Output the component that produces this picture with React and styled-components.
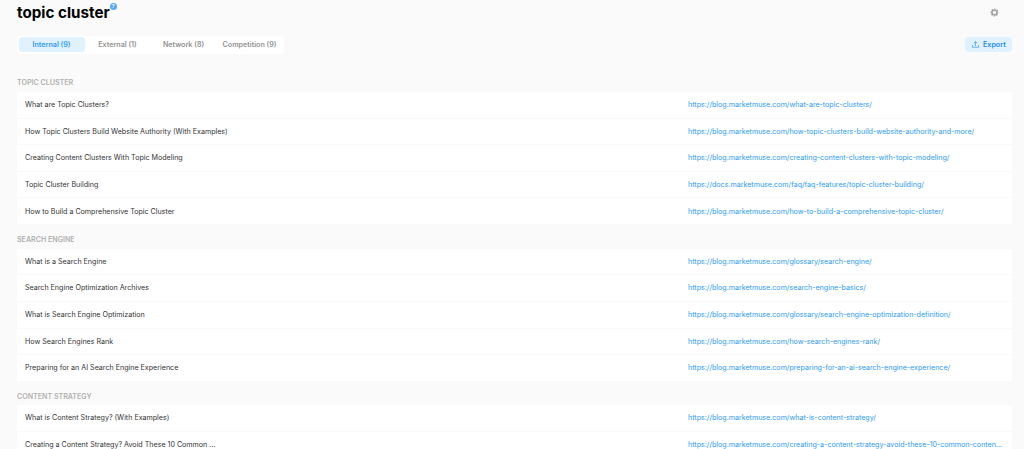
import styled, { createGlobalStyle } from "styled-components"
import { useState } from "react"


const GlobalStyle = createGlobalStyle`
    * {
        box-sizing: border-box;
    }
    body {
        margin: 0;
        height: 449px;
        overflow: hidden;
        background-color: #fafafa;
        font-family: Inter, "Liberation Sans", sans-serif;
    }
`
const Page = styled.div`
    display: flex;
    flex-direction: column;
    height: 449px;
    overflow: hidden;
    padding: 0 12px 0 17px;
`
const Header = styled.div`
    display: flex;
    justify-content: space-between;
    align-items: center;
    flex-shrink: 0;
    height: 24px;
    padding-right: 13px;
`
const Title = styled.h1`
    display: flex;
    align-items: flex-start;
    margin: 0;
    padding-top: 1px;
    color: #000;
    font-size: 15.2px;
    font-weight: 700;
    line-height: 20px;
`
const Help = styled.sup`
    display: flex;
    justify-content: center;
    align-items: center;
    width: 7px;
    height: 7px;
    border-radius: 50%;
    background-color: #55aaf8;
    color: #fff;
    font-size: 5px;
    font-weight: 700;
    line-height: 7px;
`
const Toolbar = styled.div`
    display: flex;
    justify-content: space-between;
    align-items: center;
    flex-shrink: 0;
    height: 18px;
    margin-top: 11.5px;
`
const Tabs = styled.div`
    display: flex;
    align-items: center;
    height: 18px;
    padding: 0 1.5px;
    border-radius: 4px;
    background-color: #fff;
`
const Tab = styled.button`
    width: 66px;
    height: 15px;
    padding: 0;
    border: none;
    border-radius: 3.5px;
    background-color: ${(props) => (props.$active ? "#e0f1ff" : "transparent")};
    color: ${(props) => (props.$active ? "#2f9df7" : "#939393")};
    font-family: inherit;
    font-size: 7.15px;
    font-weight: 600;
    line-height: 15px;
    white-space: nowrap;
`
const ExportButton = styled.button`
    display: flex;
    align-items: center;
    gap: 4.5px;
    width: 47px;
    height: 15px;
    padding: 0 0 0 6.5px;
    border: none;
    border-radius: 4px;
    background-color: #e0f1ff;
    color: #1b8fee;
    font-family: inherit;
    font-size: 7.15px;
    font-weight: 600;
    line-height: 15px;
`
const Groups = styled.div`
    display: flex;
    flex-direction: column;
    flex-shrink: 0;
    margin-top: 13.9px;
`
const GroupTitle = styled.h2`
    height: 24.7px;
    margin: 0;
    padding-top: 10.8px;
    color: #b0b0b0;
    font-size: 7.1px;
    font-weight: 600;
    line-height: 10px;
    text-transform: uppercase;
`
const List = styled.div`
    display: flex;
    flex-direction: column;
    gap: 1px;
    border-radius: 2px;
    background-color: #fafafa;
`
const Row = styled.div`
    display: flex;
    align-items: center;
    height: 25.6px;
    padding: 0.6px 8px 0;
    background-color: #fff;
    font-size: 7.11px;
    line-height: 10px;
    white-space: nowrap;
`
const Name = styled.span`
    flex-shrink: 0;
    width: 663px;
    color: #333;
`
const Link = styled.a`
    color: #2d9bf5;
    text-decoration: none;
`

const tabs = ["Internal (9)", "External (1)", "Network (8)", "Competition (9)"]

const groups = [
    {
        title: "Topic Cluster",
        pages: [
            ["What are Topic Clusters?", "https://blog.marketmuse.com/what-are-topic-clusters/"],
            ["How Topic Clusters Build Website Authority (With Examples)", "https://blog.marketmuse.com/how-topic-clusters-build-website-authority-and-more/"],
            ["Creating Content Clusters With Topic Modeling", "https://blog.marketmuse.com/creating-content-clusters-with-topic-modeling/"],
            ["Topic Cluster Building", "https://docs.marketmuse.com/faq/faq-features/topic-cluster-building/"],
            ["How to Build a Comprehensive Topic Cluster", "https://blog.marketmuse.com/how-to-build-a-comprehensive-topic-cluster/"],
        ],
    },
    {
        title: "Search Engine",
        pages: [
            ["What is a Search Engine", "https://blog.marketmuse.com/glossary/search-engine/"],
            ["Search Engine Optimization Archives", "https://blog.marketmuse.com/search-engine-basics/"],
            ["What is Search Engine Optimization", "https://blog.marketmuse.com/glossary/search-engine-optimization-definition/"],
            ["How Search Engines Rank", "https://blog.marketmuse.com/how-search-engines-rank/"],
            ["Preparing for an AI Search Engine Experience", "https://blog.marketmuse.com/preparing-for-an-ai-search-engine-experience/"],
        ],
    },
    {
        title: "Content Strategy",
        pages: [
            ["What is Content Strategy? (With Examples)", "https://blog.marketmuse.com/what-is-content-strategy/"],
            ["Creating a Content Strategy? Avoid These 10 Common ...", "https://blog.marketmuse.com/creating-a-content-strategy-avoid-these-10-common-conten..."],
        ],
    },
]

function GearIcon() {
    return (
        <svg width="9" height="9" viewBox="0 0 18 18" fill="none" stroke="#a0a0a0">
            <circle cx="9" cy="9" r="5" strokeWidth="3.2" />
            <circle cx="9" cy="9" r="7" strokeWidth="2.2" strokeDasharray="2.75 2.75" strokeDashoffset="1.37" />
        </svg>
    )
}

function UploadIcon() {
    return (
        <svg width="7" height="7" viewBox="0 0 14 14" fill="none" stroke="#3a9ff2" strokeWidth="1.5" strokeLinecap="round" strokeLinejoin="round">
            <path d="M7 9V1.5M4.2 4 7 1.2 9.8 4M1 9v3.5h12V9" />
        </svg>
    )
}

function App() {

    const [active, setActive] = useState(0)

    return (
        <Page>
            <GlobalStyle />
            <Header>
                <Title>topic cluster<Help>?</Help></Title>
                <GearIcon />
            </Header>
            <Toolbar>
                <Tabs>
                    {tabs.map((tab, index) => (
                        <Tab key={tab} $active={index === active} onClick={() => setActive(index)}>{tab}</Tab>
                    ))}
                </Tabs>
                <ExportButton><UploadIcon />Export</ExportButton>
            </Toolbar>
            <Groups>
                {groups.map((group) => (
                    <div key={group.title}>
                        <GroupTitle>{group.title}</GroupTitle>
                        <List>
                            {group.pages.map(([name, url]) => (
                                <Row key={url}>
                                    <Name>{name}</Name>
                                    <Link href={url}>{url}</Link>
                                </Row>
                            ))}
                        </List>
                    </div>
                ))}
            </Groups>
        </Page>
    )
}
export default App
